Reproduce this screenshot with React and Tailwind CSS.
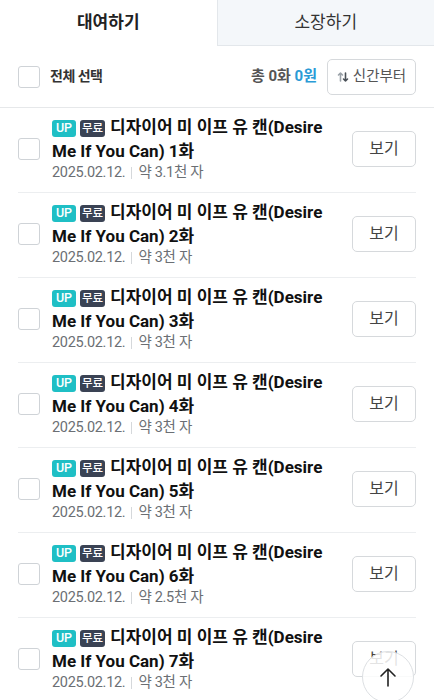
import React from 'react';

const episodes = [
  { no: 1, size: '3.1천' },
  { no: 2, size: '3천' },
  { no: 3, size: '3천' },
  { no: 4, size: '3천' },
  { no: 5, size: '3천' },
  { no: 6, size: '2.5천' },
  { no: 7, size: '3천' },
];

const Checkbox = () => (
  <span className="block w-[22px] h-[22px] shrink-0 rounded-[3px] border border-[#cfd3d7] bg-white" />
);

const SortIcon = () => (
  <svg width="12" height="12" viewBox="0 0 12 12" fill="none" strokeWidth="1.6" strokeLinecap="round" strokeLinejoin="round">
    <path d="M3.5 10V2M1.5 4l2-2 2 2" stroke="#9aa1a8" />
    <path d="M8.5 2v8M6.5 8l2 2 2-2" stroke="#4a5057" />
  </svg>
);

const EpisodeRow = ({ no, size }) => (
  <div className="flex items-center border-b border-[#eceef0] pt-[7px] pb-[10px]">
    <Checkbox />
    <div className="ml-[12px] flex-1 min-w-0">
      <div className="w-[275px] text-[17px] leading-[24px] font-bold text-[#111]">
        <span className="mr-[4px] inline-flex h-[17px] w-[24px] items-center justify-center rounded-[3px] bg-[#1fbfc5] align-[1px] text-[12.5px] leading-none font-medium text-white">UP</span>
        <span className="mr-[5px] inline-flex h-[17px] w-[25px] items-center justify-center rounded-[3px] bg-[#3a4354] align-[1px] text-[11.5px] leading-none font-medium text-white">무료</span>
        디자이어 미 이프 유 캔(Desire Me If You Can) {no}화
      </div>
      <div className="flex items-center text-[14.5px] leading-[19px] text-[#6b6f74] tracking-[-0.3px]">
        <span>2025.02.12.</span>
        <span className="mx-[6px] h-[12px] w-px bg-[#d5d8db]" />
        <span>약 {size} 자</span>
      </div>
    </div>
    <button className="h-[36px] w-[64px] shrink-0 rounded-[5px] border border-[#d6d9dc] bg-white text-[16px] text-[#444]">
      보기
    </button>
  </div>
);

export default function App() {
  return (
    <div className="relative min-h-screen bg-white font-['Roboto','Noto_Sans_CJK_KR',sans-serif]">
      <div className="flex h-[46px]">
        <div className="flex flex-1 items-center justify-center text-[17px] font-bold text-[#222]">대여하기</div>
        <div className="flex flex-1 items-center justify-center border-b border-l border-[#e3e7eb] bg-[#f4f7fa] text-[17px] text-[#333]">
          소장하기
        </div>
      </div>

      <div className="flex h-[62px] items-center border-b border-[#e6e8ea] px-[18px]">
        <Checkbox />
        <span className="ml-[10px] text-[14px] font-bold tracking-[-0.5px] text-[#333]">전체 선택</span>
        <span className="ml-auto text-[15px] font-bold text-[#555]">
          총 0화 <span className="text-[#2a9bd6]">0원</span>
        </span>
        <button className="ml-[10px] flex h-[36px] w-[89px] items-center justify-center gap-[4px] rounded-[5px] border border-[#d6d9dc] bg-white text-[14.5px] text-[#555]">
          <SortIcon />
          신간부터
        </button>
      </div>

      <div className="px-[18px]">
        {episodes.map((e) => (
          <EpisodeRow key={e.no} {...e} />
        ))}
      </div>

      <button className="fixed bottom-[-3px] right-[20px] flex h-[52px] w-[52px] items-center justify-center rounded-full border border-[#dcdfe2] bg-white/85">
        <svg width="22" height="22" viewBox="0 0 22 22" fill="none" stroke="#222" strokeWidth="1.6" strokeLinecap="round" strokeLinejoin="round">
          <path d="M11 20V3M4 10l7-7 7 7" />
        </svg>
      </button>
    </div>
  );
}
